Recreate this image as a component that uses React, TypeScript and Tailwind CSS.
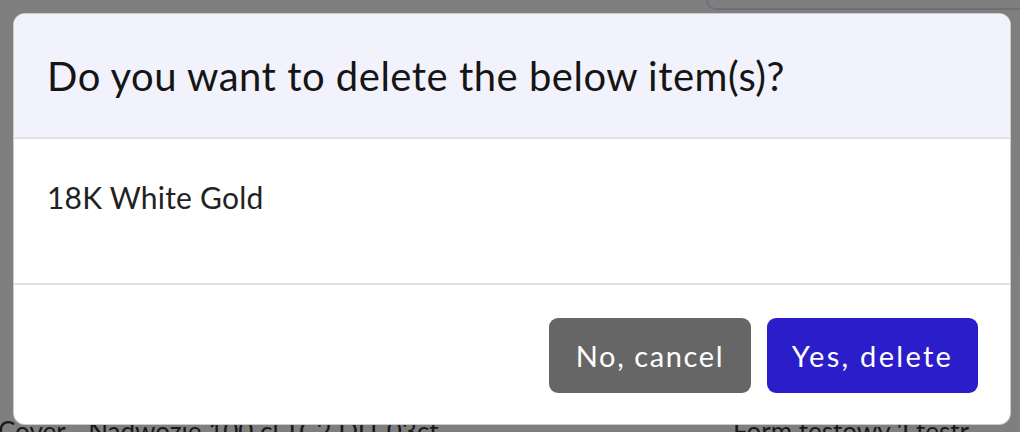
import React from "react";

export default function App() {
  return (
    <div className="relative w-[1020px] h-[432px] overflow-hidden bg-white font-['Lato',_sans-serif]">
      {/* page behind the dialog */}
      <div className="flex h-full flex-col justify-between">
        <div className="flex justify-end">
          <div className="ml-auto h-[10px] w-[314px] rounded-bl-[10px] border-b-2 border-l-2 border-[#dcdde6]" />
        </div>
        <div className="flex gap-[150px] text-[26px] leading-[26px] text-[#333] translate-y-[12px]">
          <span className="-ml-[2px] w-[585px] whitespace-nowrap">Cover - Nadwozie 100 cl TC2 DU-03ct...</span>
          <span className="whitespace-nowrap">Form testowy 'I testr</span>
        </div>
      </div>

      {/* modal backdrop + dialog */}
      <div className="absolute inset-0 bg-black/50 pl-[13px] pt-[13px]">
        <div className="flex h-[412px] w-[998px] flex-col overflow-hidden rounded-[12px] border border-black/20 bg-white">
          <div className="flex h-[125px] items-center border-b-2 border-[#dee2e6] bg-[#f2f2fc] px-[33px]">
            <h2 className="text-[40px] font-normal tracking-[0.5px] text-[#151515]">Do you want to delete the below item(s)?</h2>
          </div>
          <div className="h-[146px] border-b-2 border-[#dee2e6] px-[33px] pt-[38px]">
            <p className="text-[30px] leading-[40px] tracking-[0.2px] text-[#222]">18K White Gold</p>
          </div>
          <div className="flex flex-1 items-start justify-end gap-4 pr-[32px] pt-[33px]">
            <button className="h-[75px] w-[202px] rounded-[9px] bg-[#666666] text-[29px] tracking-[1.6px] text-white">No, cancel</button>
            <button className="h-[75px] w-[211px] rounded-[9px] bg-[#2b1dc9] text-[29px] tracking-[2.3px] text-white">Yes, delete</button>
          </div>
        </div>
      </div>
    </div>
  );
}
